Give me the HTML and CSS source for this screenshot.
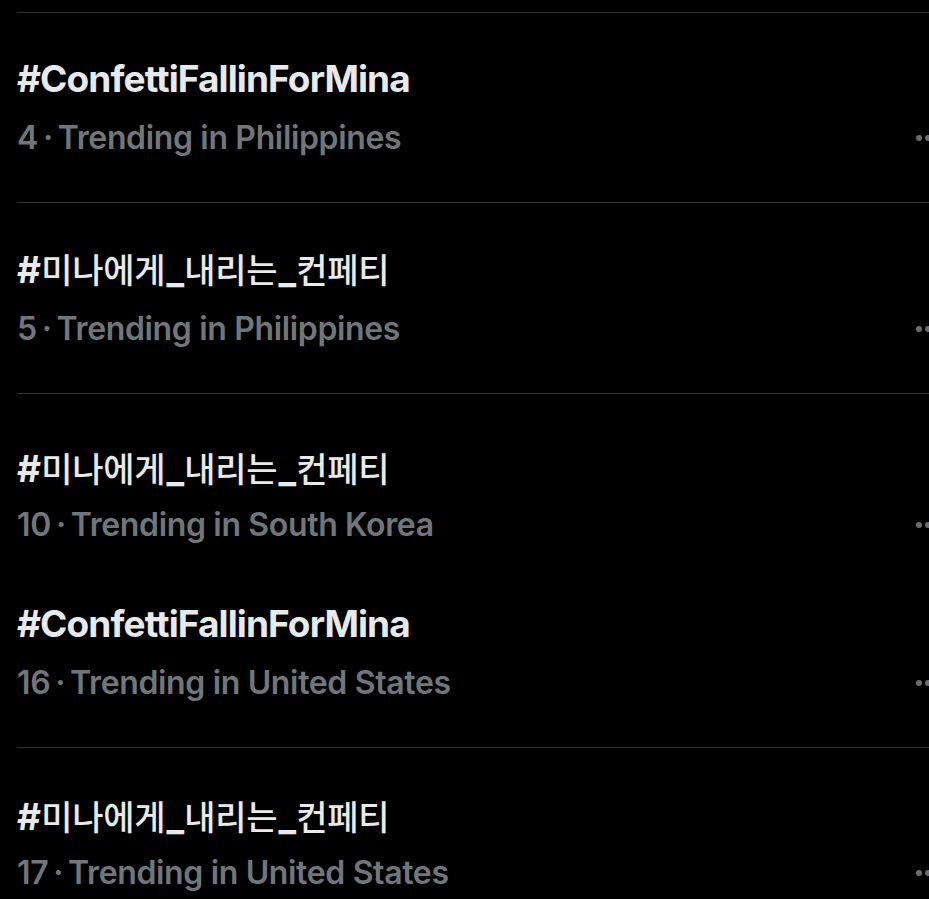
FILE: index.html
```html
<!DOCTYPE html>
<html lang="en">
<head>
<meta charset="utf-8">
<title>Trends</title>
<link rel="stylesheet" href="styles.css">
</head>
<body>
<main class="trends">
  <div class="trend rule first">
    <div class="title">#ConfettiFallinForMina</div>
    <div class="meta"><span class="sub">4&thinsp;·&thinsp;Trending in Philippines</span><span class="more"><i></i><i></i><i></i></span></div>
  </div>
  <div class="trend rule">
    <div class="title">#<span class="hg">미나에게</span>_<span class="hg">내리는</span>_<span class="hg">컨페티</span></div>
    <div class="meta"><span class="sub">5&thinsp;·&thinsp;Trending in Philippines</span><span class="more"><i></i><i></i><i></i></span></div>
  </div>
  <div class="trend rule third">
    <div class="title">#<span class="hg">미나에게</span>_<span class="hg">내리는</span>_<span class="hg">컨페티</span></div>
    <div class="meta"><span class="sub">10&thinsp;·&thinsp;Trending in South Korea</span><span class="more"><i></i><i></i><i></i></span></div>
  </div>
  <div class="trend fourth">
    <div class="title">#ConfettiFallinForMina</div>
    <div class="meta"><span class="sub">16&thinsp;·&thinsp;Trending in United States</span><span class="more"><i></i><i></i><i></i></span></div>
  </div>
  <div class="trend rule fifth">
    <div class="title">#<span class="hg">미나에게</span>_<span class="hg">내리는</span>_<span class="hg">컨페티</span></div>
    <div class="meta"><span class="sub">17&thinsp;·&thinsp;Trending in United States</span><span class="more"><i></i><i></i><i></i></span></div>
  </div>
</main>
</body>
</html>
```
FILE: styles.css
```css
html, body {
  margin: 0;
  padding: 0;
  background: #000;
  overflow: hidden;
}
body {
  width: 929px;
  height: 899px;
  font-family: Inter, "Noto Sans", "Noto Sans CJK KR", sans-serif;
}
.trends {
  display: flex;
  flex-direction: column;
  padding: 12px 0 0 17px;
}
.trend {
  display: flex;
  flex-direction: column;
  padding: 44px 0 44px 0;
}
.trend.rule {
  border-top: 1px solid #2f3336;
}
.trend.third {
  padding-top: 52px;
  padding-bottom: 13px;
}
.trend.fifth {
  padding-top: 46px;
}
.title {
  color: #e7e9ea;
  font-size: 37px;
  line-height: 44px;
  font-weight: 700;
  letter-spacing: -0.9px;
  white-space: nowrap;
}
.hg {
  font-family: "Noto Sans CJK KR", sans-serif;
  font-weight: 500;
  font-size: 34px;
  letter-spacing: -0.2px;
  margin: 0 1px;
}
.meta {
  display: flex;
  align-items: center;
  justify-content: space-between;
  margin-top: 17px;
  height: 40px;
}
.third .meta, .fifth .meta {
  margin-top: 14px;
}
.sub {
  color: #71767b;
  font-size: 32px;
  line-height: 40px;
  font-weight: 600;
  letter-spacing: -0.35px;
  white-space: nowrap;
}
.more {
  display: flex;
  gap: 3px;
  margin-right: -11px;
}
.more i {
  display: block;
  width: 6px;
  height: 6px;
  border-radius: 50%;
  background: #6a6d70;
}
```
